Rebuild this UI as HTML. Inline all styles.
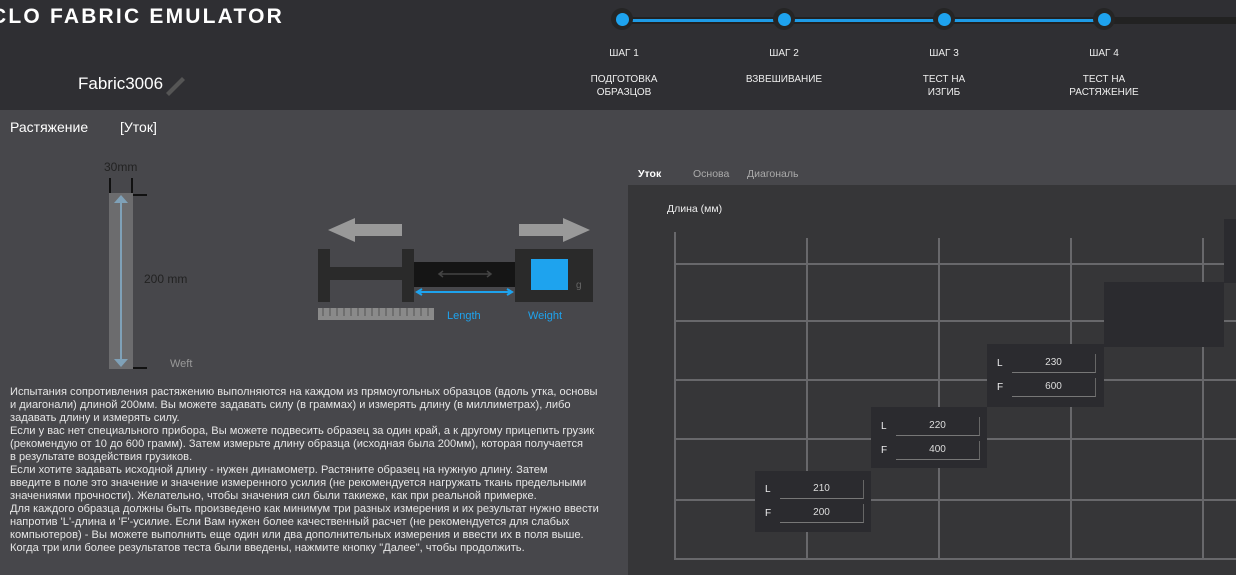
<!DOCTYPE html>
<html><head><meta charset="utf-8"><style>
*{margin:0;padding:0;box-sizing:border-box}
body{width:1236px;height:575px;overflow:hidden;background:#47474b;font-family:"Liberation Sans","DejaVu Sans",sans-serif;position:relative;color:#fff}
.hdr{position:absolute;left:0;top:0;width:1236px;height:110px;background:#2f2f33}
.abs{position:absolute}
.step{position:absolute;width:120px;text-align:center;font-size:10px;color:#eee;line-height:13px}
.txt{position:absolute;left:10px;top:386px;font-size:11.1px;line-height:13px;color:#e6e6e6;white-space:nowrap;letter-spacing:0}
.panel{position:absolute;left:628px;top:185px;width:608px;height:390px;background:#363638}
.gv{position:absolute;width:2px;background:#68686b}
.gh{position:absolute;height:2px;background:#68686b}
.box{position:absolute;background:#2b2b2f}
.lbl{position:absolute;font-size:10px;color:#eee}
.fld{position:absolute;height:19px;width:84px;border-bottom:1px solid #777;border-right:1px solid #666;font-size:10px;color:#ddd;text-align:center;line-height:18px}
</style></head><body>
<div class="hdr"></div>
<div class="abs" style="left:-9px;top:5px;font-size:21px;font-weight:bold;letter-spacing:2.2px;color:#fff">CLO FABRIC EMULATOR</div>
<div class="abs" style="left:78px;top:74px;font-size:17px;color:#fff">Fabric3006</div>
<svg class="abs" style="left:162px;top:72px" width="26" height="24"><path d="M4 21 L20 5 L23 8 L7 24 Z" fill="#555"/></svg>
<div class="abs" style="left:622px;top:17px;width:614px;height:7px;background:#222"></div>
<div class="abs" style="left:622px;top:19px;width:482px;height:3px;background:#1e9be6"></div>
<div class="abs" style="left:611px;top:8px;width:22px;height:22px;border-radius:50%;background:#252525"></div>
<div class="abs" style="left:773px;top:8px;width:22px;height:22px;border-radius:50%;background:#252525"></div>
<div class="abs" style="left:933px;top:8px;width:22px;height:22px;border-radius:50%;background:#252525"></div>
<div class="abs" style="left:1093px;top:8px;width:22px;height:22px;border-radius:50%;background:#252525"></div>
<div class="abs" style="left:616px;top:13px;width:13px;height:13px;border-radius:50%;background:#1ea3ee"></div>
<div class="abs" style="left:778px;top:13px;width:13px;height:13px;border-radius:50%;background:#1ea3ee"></div>
<div class="abs" style="left:938px;top:13px;width:13px;height:13px;border-radius:50%;background:#1ea3ee"></div>
<div class="abs" style="left:1098px;top:13px;width:13px;height:13px;border-radius:50%;background:#1ea3ee"></div>
<div class="step" style="left:564px;top:47px">ШАГ 1</div><div class="step" style="left:564px;top:73px">ПОДГОТОВКА<br>ОБРАЗЦОВ</div>
<div class="step" style="left:724px;top:47px">ШАГ 2</div><div class="step" style="left:724px;top:73px">ВЗВЕШИВАНИЕ</div>
<div class="step" style="left:884px;top:47px">ШАГ 3</div><div class="step" style="left:884px;top:73px">ТЕСТ НА<br>ИЗГИБ</div>
<div class="step" style="left:1044px;top:47px">ШАГ 4</div><div class="step" style="left:1044px;top:73px">ТЕСТ НА<br>РАСТЯЖЕНИЕ</div>

<div class="abs" style="left:10px;top:119px;font-size:14px">Растяжение</div>
<div class="abs" style="left:120px;top:119px;font-size:14px">[Уток]</div>

<div class="abs" style="left:104px;top:160px;font-size:12px;color:#222">30mm</div>
<div class="abs" style="left:109px;top:178px;width:2px;height:15px;background:#111"></div>
<div class="abs" style="left:131px;top:178px;width:2px;height:15px;background:#111"></div>
<div class="abs" style="left:133px;top:194px;width:14px;height:2px;background:#111"></div>
<div class="abs" style="left:133px;top:367px;width:14px;height:2px;background:#111"></div>
<div class="abs" style="left:109px;top:193px;width:24px;height:176px;background:#6c6c6e"></div>
<svg class="abs" style="left:109px;top:193px" width="24" height="176"><line x1="12" y1="6" x2="12" y2="170" stroke="#7fa1b8" stroke-width="2"/><path d="M5 10 L12 2 L19 10Z M5 166 L12 174 L19 166Z" fill="#7fa1b8"/></svg>
<div class="abs" style="left:144px;top:272px;font-size:12px;color:#222">200 mm</div>
<div class="abs" style="left:170px;top:358px;font-size:11px;color:#999">Weft</div>

<svg class="abs" style="left:315px;top:212px" width="290" height="115">
<path d="M13 18 L40 6 L40 12 L87 12 L87 24 L40 24 L40 30Z" fill="#999"/>
<path d="M275 18 L248 6 L248 12 L204 12 L204 24 L248 24 L248 30Z" fill="#999"/>
<rect x="3" y="37" width="12" height="53" fill="#2a2a2a"/>
<rect x="15" y="55" width="72" height="13" fill="#2a2a2a"/>
<rect x="87" y="37" width="12" height="53" fill="#2a2a2a"/>
<rect x="99" y="50" width="101" height="25" fill="#151515"/>
<path d="M125 62 L175 62 M128 59 L124 62 L128 65 M172 59 L176 62 L172 65" stroke="#444" stroke-width="1.5" fill="none"/>
<path d="M103 80 L196 80 M107 77 L102 80 L107 83 M192 77 L197 80 L192 83" stroke="#1ea3ee" stroke-width="2" fill="none"/>
<rect x="200" y="37" width="78" height="53" fill="#2a2a2a"/>
<rect x="216" y="47" width="37" height="31" fill="#1ea3ee"/>
<text x="261" y="76" font-size="10" fill="#666" font-family="Liberation Sans">g</text>
<rect x="3" y="96" width="116" height="12" fill="#8a8a8a"/>
<path d="M8 96v8M15 96v8M22 96v8M29 96v8M36 96v8M43 96v8M50 96v8M57 96v8M64 96v8M71 96v8M78 96v8M85 96v8M92 96v8M99 96v8M106 96v8M113 96v8" stroke="#666" stroke-width="1.5"/>
<text x="132" y="107" font-size="11" fill="#1ea3ee" font-family="Liberation Sans">Length</text>
<text x="213" y="107" font-size="11" fill="#1ea3ee" font-family="Liberation Sans">Weight</text>
</svg>

<div class="txt">Испытания сопротивления растяжению выполняются на каждом из прямоугольных образцов (вдоль утка, основы<br>и диагонали) длиной 200мм. Вы можете задавать силу (в граммах) и измерять длину (в миллиметрах), либо<br>задавать длину и измерять силу.<br>Если у вас нет специального прибора, Вы можете подвесить образец за один край, а к другому прицепить грузик<br>(рекомендую от 10 до 600 грамм). Затем измерьте длину образца (исходная была 200мм), которая получается<br>в результате воздействия грузиков.<br>Если хотите задавать исходной длину - нужен динамометр. Растяните образец на нужную длину. Затем<br>введите в поле это значение и значение измеренного усилия (не рекомендуется нагружать ткань предельными<br>значениями прочности). Желательно, чтобы значения сил были такиеже, как при реальной примерке.<br>Для каждого образца должны быть произведено как минимум три разных измерения и их результат нужно ввести<br>напротив 'L'-длина и 'F'-усилие. Если Вам нужен более качественный расчет (не рекомендуется для слабых<br>компьютеров) - Вы можете выполнить еще один или два дополнительных измерения и ввести их в поля выше.<br>Когда три или более результатов теста были введены, нажмите кнопку "Далее", чтобы продолжить.</div>

<div class="abs" style="left:638px;top:168px;font-size:10.5px;font-weight:bold;color:#fff">Уток</div>
<div class="abs" style="left:693px;top:168px;font-size:10.5px;color:#aaa">Основа</div>
<div class="abs" style="left:747px;top:168px;font-size:10.5px;color:#aaa">Диагональ</div>

<div class="panel"></div>
<div class="abs" style="left:667px;top:203px;font-size:10.5px;color:#eee">Длина (мм)</div>
<div class="gv" style="left:674px;top:232px;height:328px"></div>
<div class="gv" style="left:806px;top:238px;height:320px"></div>
<div class="gv" style="left:938px;top:238px;height:320px"></div>
<div class="gv" style="left:1070px;top:238px;height:320px"></div>
<div class="gv" style="left:1202px;top:238px;height:320px"></div>
<div class="gh" style="left:675px;top:263px;width:561px"></div>
<div class="gh" style="left:675px;top:320px;width:561px"></div>
<div class="gh" style="left:675px;top:379px;width:561px"></div>
<div class="gh" style="left:675px;top:438px;width:561px"></div>
<div class="gh" style="left:675px;top:499px;width:561px"></div>
<div class="gh" style="left:675px;top:558px;width:561px"></div>

<div class="box" style="left:755px;top:471px;width:116px;height:61px"></div>
<div class="lbl" style="left:765px;top:484px">L</div><div class="fld" style="left:780px;top:480px">210</div>
<div class="lbl" style="left:765px;top:508px">F</div><div class="fld" style="left:780px;top:504px">200</div>
<div class="box" style="left:871px;top:407px;width:116px;height:61px"></div>
<div class="lbl" style="left:881px;top:421px">L</div><div class="fld" style="left:896px;top:417px">220</div>
<div class="lbl" style="left:881px;top:445px">F</div><div class="fld" style="left:896px;top:441px">400</div>
<div class="box" style="left:987px;top:344px;width:117px;height:63px"></div>
<div class="lbl" style="left:997px;top:358px">L</div><div class="fld" style="left:1012px;top:354px">230</div>
<div class="lbl" style="left:997px;top:382px">F</div><div class="fld" style="left:1012px;top:378px">600</div>
<div class="box" style="left:1104px;top:282px;width:120px;height:65px"></div>
<div class="box" style="left:1224px;top:219px;width:12px;height:64px"></div>
</body></html>
